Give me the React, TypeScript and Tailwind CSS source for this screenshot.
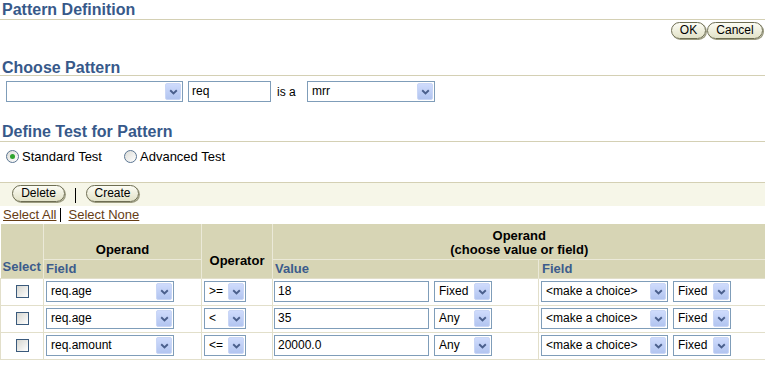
import React from "react";

type Row = {
  field: string;
  op: string;
  value: string;
  mode: string;
};

const ROWS: Row[] = [
  { field: "req.age", op: ">=", value: "18", mode: "Fixed" },
  { field: "req.age", op: "<", value: "35", mode: "Any" },
  { field: "req.amount", op: "<=", value: "20000.0", mode: "Any" },
];

function Chevron() {
  return (
    <svg width="9" height="6" viewBox="0 0 9 6" aria-hidden="true">
      <path d="M1.2 1.2 L4.5 4.4 L7.8 1.2" fill="none" stroke="#4a5f8c" strokeWidth="1.9" />
    </svg>
  );
}

function DropSelect({ value, className }: { value: string; className: string }) {
  return (
    <div className={`flex h-[21px] items-stretch border border-[#7f9db9] bg-white ${className}`}>
      <span className="flex-1 truncate pl-[4px] leading-[19px] text-black">{value}</span>
      <span className="m-px flex w-[16px] items-center justify-center rounded-[2px] border border-[#c9d6f6] bg-gradient-to-b from-[#cfdbfc] to-[#b2c5f0]">
        <Chevron />
      </span>
    </div>
  );
}

function TextBox({ value, className }: { value: string; className: string }) {
  return (
    <div className={`h-[21px] border border-[#7f9db9] bg-white pl-[3px] leading-[19px] text-black ${className}`}>
      {value}
    </div>
  );
}

function PillButton({ label, className }: { label: string; className: string }) {
  return (
    <button className={`h-[17px] rounded-full border border-[#6d6d52] bg-gradient-to-b from-[#fcfcf4] to-[#e2e2c8] text-center text-[12px] leading-[15px] text-black shadow-[1px_1px_0_#9c9c80] ${className}`}>
      {label}
    </button>
  );
}

function Radio({ checked }: { checked?: boolean }) {
  return (
    <span className="flex h-[13px] w-[13px] items-center justify-center rounded-full border border-[#5a7592] bg-gradient-to-br from-[#dcdcd7] to-white">
      {checked && <span className="h-[5px] w-[5px] rounded-full bg-[#2ea42e]" />}
    </span>
  );
}

function Checkbox() {
  return (
    <span className="mx-auto block h-[13px] w-[13px] border border-[#3a5a7c] bg-gradient-to-br from-[#d6d6d0] to-white" />
  );
}

export default function App() {
  return (
    <div className="w-[765px] bg-white font-['Liberation_Sans',Arial,sans-serif] text-[12px] text-black">
      {/* Pattern Definition */}
      <div className="h-[20px] border-b border-[#d4d0b4] pl-[2px] text-[16px] font-bold leading-[19px] text-[#37598a]">
        Pattern Definition
      </div>
      <div className="mt-[2px] flex h-[17px] justify-end gap-px pr-[2px]">
        <PillButton label="OK" className="w-[35px]" />
        <PillButton label="Cancel" className="w-[56px]" />
      </div>

      {/* Choose Pattern */}
      <div className="mt-[21px] border-b border-[#d4d0b4] pl-[2px] text-[16px] font-bold leading-[15px] text-[#37598a]">
        Choose Pattern
      </div>
      <div className="mt-[5px] flex items-center pl-[6px]">
        <DropSelect value="" className="w-[177px]" />
        <TextBox value="req" className="ml-[5px] w-[83px]" />
        <span className="ml-[6px] w-[30px]">is a</span>
        <DropSelect value="mrr" className="w-[128px]" />
      </div>

      {/* Define Test */}
      <div className="mt-[20px] border-b border-[#d4d0b4] pl-[2px] text-[16px] font-bold leading-[19px] text-[#37598a]">
        Define Test for Pattern
      </div>
      <div className="mt-[7px] flex h-[15px] items-center pl-[6px] text-[13px]">
        <Radio checked />
        <span className="ml-[3px] w-[102px]">Standard Test</span>
        <Radio />
        <span className="ml-[3px]">Advanced Test</span>
      </div>

      {/* Toolbar */}
      <div className="mt-[18px] flex h-[24px] items-start gap-[10px] border-t border-[#d4d0b4] bg-[#f6f6e8] pl-[12px] pt-[2px]">
        <PillButton label="Delete" className="w-[53px]" />
        <span className="mt-[3px] h-[15px] w-px bg-black" />
        <PillButton label="Create" className="w-[53px]" />
      </div>
      <div className="flex h-[18px] items-center pl-[3px] text-[13px]">
        <a className="text-[#663d14] underline">Select All</a>
        <span className="ml-[4px] mr-[7px] h-[14px] w-px bg-black" />
        <a className="text-[#663d14] underline">Select None</a>
      </div>

      {/* Table */}
      <table className="w-full table-fixed border-collapse">
        <colgroup>
          <col className="w-[43px]" />
          <col className="w-[158px]" />
          <col className="w-[71px]" />
          <col className="w-[266px]" />
          <col className="w-[227px]" />
        </colgroup>
        <thead className="bg-[#d7d5b5] text-[13px] font-bold">
          <tr className="h-[35px]">
            <th rowSpan={2} className="border-r border-[#ebe9d8] pb-[1px] pl-[2px] text-left align-bottom text-[#3c5c8c]">
              Select
            </th>
            <th className="border-r border-b border-[#ebe9d8] pb-[2px] align-bottom leading-[14px]">Operand</th>
            <th rowSpan={2} className="border-r border-[#ebe9d8] pb-[10px] align-bottom leading-[14px]">
              Operator
            </th>
            <th colSpan={2} className="border-b border-[#ebe9d8] pb-[2px] align-bottom leading-[14px]">
              Operand
              <br />
              (choose value or field)
            </th>
          </tr>
          <tr className="h-[19px] text-left text-[#3c5c8c]">
            <th className="border-r border-[#ebe9d8] pl-[2px] leading-[14px]">Field</th>
            <th className="border-r border-[#ebe9d8] pl-[2px] leading-[14px]">Value</th>
            <th className="pl-[3px] leading-[14px]">Field</th>
          </tr>
        </thead>
        <tbody>
          {ROWS.map((r, i) => (
            <tr key={i} className="h-[27px]">
              <td className="border border-[#e2dfca] p-0">
                <Checkbox />
              </td>
              <td className="border border-[#e2dfca] p-0 pl-[2px]">
                <DropSelect value={r.field} className="w-[128px]" />
              </td>
              <td className="border border-[#e2dfca] p-0 pl-[2px]">
                <DropSelect value={r.op} className="w-[42px]" />
              </td>
              <td className="border border-[#e2dfca] p-0 pl-px">
                <div className="flex gap-[5px]">
                  <TextBox value={r.value} className="w-[155px]" />
                  <DropSelect value={r.mode} className="w-[58px]" />
                </div>
              </td>
              <td className="border border-[#e2dfca] p-0 pl-[2px]">
                <div className="flex gap-[5px]">
                  <DropSelect value="<make a choice>" className="w-[127px]" />
                  <DropSelect value="Fixed" className="w-[58px]" />
                </div>
              </td>
            </tr>
          ))}
        </tbody>
      </table>
    </div>
  );
}
